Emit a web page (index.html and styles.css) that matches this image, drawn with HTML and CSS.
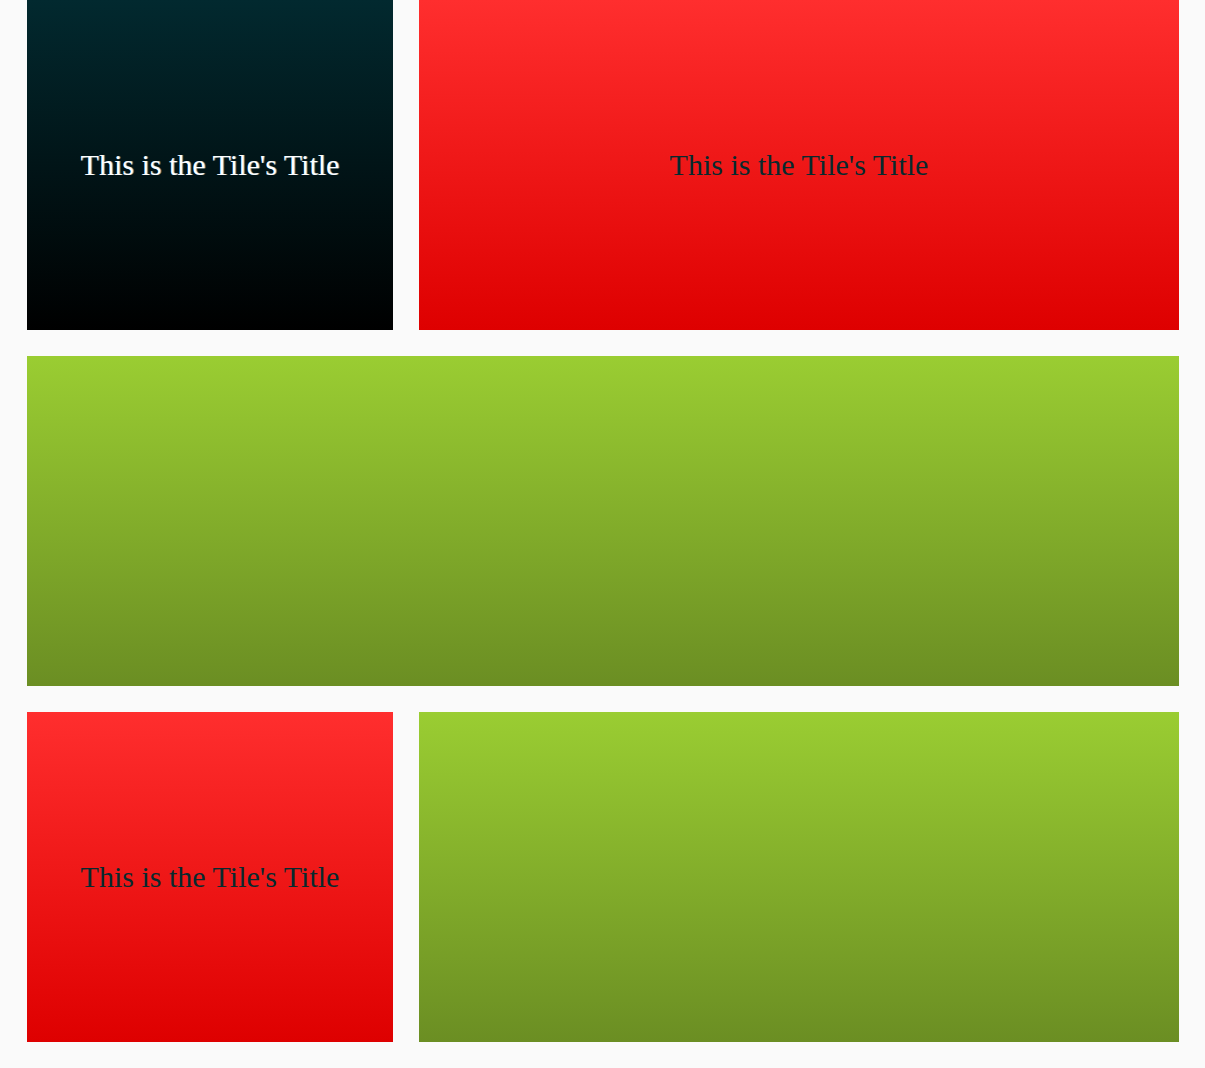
FILE: index.html
```html
<!DOCTYPE html>
<html>
<head>
<meta charset="utf-8">
<link rel="stylesheet" href="styles.css">
</head>
<body>
<div class="grid">
  <div class="tile dark"><h2 class="title light">This is the Tile's Title</h2></div>
  <div class="tile red"><h2 class="title">This is the Tile's Title</h2></div>
  <div class="tile green wide"></div>
  <div class="tile red"><h2 class="title">This is the Tile's Title</h2></div>
  <div class="tile green"></div>
</div>
</body>
</html>
```

FILE: styles.css
```css
html, body {
  margin: 0;
  padding: 0;
  background: #fafafa;
}
.grid {
  display: grid;
  grid-template-columns: 366px 760px;
  grid-auto-rows: 330px;
  gap: 26px;
  padding: 0 26px 26px 27px;
}
.tile {
  display: flex;
  align-items: center;
  justify-content: center;
}
.wide {
  grid-column: 1 / 3;
}
.dark {
  background: linear-gradient(to bottom, #02292f, #000000);
}
.red {
  background: linear-gradient(to bottom, #ff2e2e, #de0000);
}
.green {
  background: linear-gradient(to bottom, #9acd32, #6b8e23);
}
.title {
  margin: 0;
  font-family: "Liberation Serif", "Times New Roman", serif;
  font-weight: normal;
  font-size: 30px;
  color: #062a2e;
}
.title.light {
  color: #ffffff;
  text-shadow: 1px 0 0 rgba(200, 240, 255, 0.5);
}
```
